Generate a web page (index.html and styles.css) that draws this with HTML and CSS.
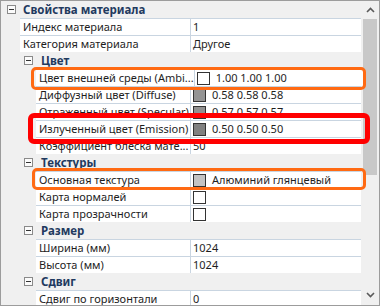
FILE: index.html
```html
<!DOCTYPE html>
<html lang="ru">
  <head>
    <meta charset="UTF-8" />
    <title>Свойства материала</title>
    <link rel="stylesheet" href="styles.css">
  </head>
  <body>
    <div class="grid">
      <div class="rows">
        <div class="cat top"><span class="tog"></span>Свойства материала</div>
        <div class="prop top"><span class="gut"></span><span class="name">Индекс материала</span><span class="val">1</span></div>
        <div class="prop top"><span class="gut"></span><span class="name">Категория материала</span><span class="val">Другое</span></div>

        <div class="cat sub"><span class="tog"></span>Цвет</div>
        <div class="prop sub"><span class="gut"></span><span class="name">Цвет внешней среды (Ambi...</span><span class="val"><i class="sw white"></i>1.00 1.00 1.00</span></div>
        <div class="prop sub"><span class="gut"></span><span class="name">Диффузный цвет (Diffuse)</span><span class="val"><i class="sw" style="background:#949494"></i>0.58 0.58 0.58</span></div>
        <div class="prop sub"><span class="gut"></span><span class="name">Отраженный цвет (Specular)</span><span class="val"><i class="sw" style="background:#919191"></i>0.57 0.57 0.57</span></div>
        <div class="prop sub"><span class="gut"></span><span class="name">Излученный цвет (Emission)</span><span class="val"><i class="sw" style="background:#808080"></i>0.50 0.50 0.50</span></div>
        <div class="prop sub"><span class="gut"></span><span class="name">Коэффициент блеска мате...</span><span class="val">50</span></div>

        <div class="cat sub"><span class="tog"></span>Текстуры</div>
        <div class="prop sub"><span class="gut"></span><span class="name">Основная текстура</span><span class="val"><i class="sw" style="background:#c3c3c3"></i>Алюминий глянцевый</span></div>
        <div class="prop sub"><span class="gut"></span><span class="name">Карта нормалей</span><span class="val"><i class="sw white"></i></span></div>
        <div class="prop sub"><span class="gut"></span><span class="name">Карта прозрачности</span><span class="val"><i class="sw white"></i></span></div>

        <div class="cat sub"><span class="tog"></span>Размер</div>
        <div class="prop sub"><span class="gut"></span><span class="name">Ширина (мм)</span><span class="val">1024</span></div>
        <div class="prop sub"><span class="gut"></span><span class="name">Высота (мм)</span><span class="val">1024</span></div>

        <div class="cat sub"><span class="tog"></span>Сдвиг</div>
        <div class="prop sub"><span class="gut"></span><span class="name">Сдвиг по горизонтали</span><span class="val">0</span></div>
      </div>

      <div class="scroll">
        <div class="arrow">
          <svg width="9" height="6" viewBox="0 0 9 6"><polyline points="1,5 4.5,1.5 8,5" fill="none" stroke="#5a5a5a" stroke-width="1.6"/></svg>
        </div>
        <div class="thumb"></div>
        <div class="arrow down">
          <svg width="9" height="6" viewBox="0 0 9 6"><polyline points="1,1 4.5,4.5 8,1" fill="none" stroke="#5a5a5a" stroke-width="1.6"/></svg>
        </div>
      </div>

      <!-- highlight frames drawn over the grid -->
      <div class="mark orange amb"></div>
      <div class="mark red emi"></div>
      <div class="mark orange tex"></div>
    </div>
  </body>
</html>
```

FILE: styles.css
```css
body {
  margin: 0;
  font-family: "Noto Sans", "Liberation Sans", sans-serif;
  font-size: 11px;
  color: #1e1e1e;
}
.grid {
  position: relative;
  width: 380px;
  height: 306px;
  box-sizing: border-box;
  border: 1px solid #9c9c9c;
  background: #f0f0f0;
  display: flex;
  overflow: hidden;
}
.rows {
  width: 360px;
}
.cat,
.prop {
  height: 17px;
  display: grid;
  grid-template-columns: var(--ind) 1fr 170px;
}
.top {
  --ind: 19px;
}
.sub {
  --ind: 35px;
}
.cat {
  display: flex;
  align-items: center;
  font-weight: bold;
  font-size: 11.5px;
  color: #1f3a5f;
  padding-left: 6px;
}
.cat.sub {
  padding-left: 23px;
}
.tog {
  width: 7px;
  height: 7px;
  border: 1px solid #8a8a8a;
  background: #fbfbfb;
  margin-right: 7px;
  position: relative;
}
.tog::after {
  content: "";
  position: absolute;
  left: 1px;
  top: 3px;
  width: 5px;
  height: 1px;
  background: #333;
}
.cat.sub .tog {
  margin-right: 8px;
}
.name,
.val {
  background: #fff;
  border-top: 1px solid #c9d5e1;
  line-height: 16px;
  white-space: nowrap;
  padding-left: 3px;
}
.name {
  border-right: 1px solid #c9d5e1;
}
.val {
  padding-left: 2px;
  display: flex;
  align-items: center;
}
.sw {
  width: 11px;
  height: 11px;
  border: 1px solid #333;
  margin-right: 6px;
  flex: none;
}
.sw.white {
  background: #fff;
}
.scroll {
  width: 18px;
  display: flex;
  flex-direction: column;
  align-items: center;
}
.arrow {
  height: 17px;
  display: flex;
  align-items: center;
  justify-content: center;
}
.arrow.down {
  margin-top: auto;
  height: 20px;
}
.thumb {
  width: 14px;
  height: 156px;
  margin-top: 1px;
  background: #c8c8c8;
}
.mark {
  position: absolute;
  box-sizing: border-box;
  border-radius: 5px;
}
.orange {
  border: 3px solid #ff6a13;
}
.red {
  border: 5px solid #ff0000;
  border-radius: 6px;
}
.amb {
  left: 30px;
  top: 66px;
  width: 335px;
  height: 23px;
}
.emi {
  left: 27px;
  top: 112px;
  width: 342px;
  height: 31px;
}
.tex {
  left: 31px;
  top: 167px;
  width: 334px;
  height: 22px;
}
```
